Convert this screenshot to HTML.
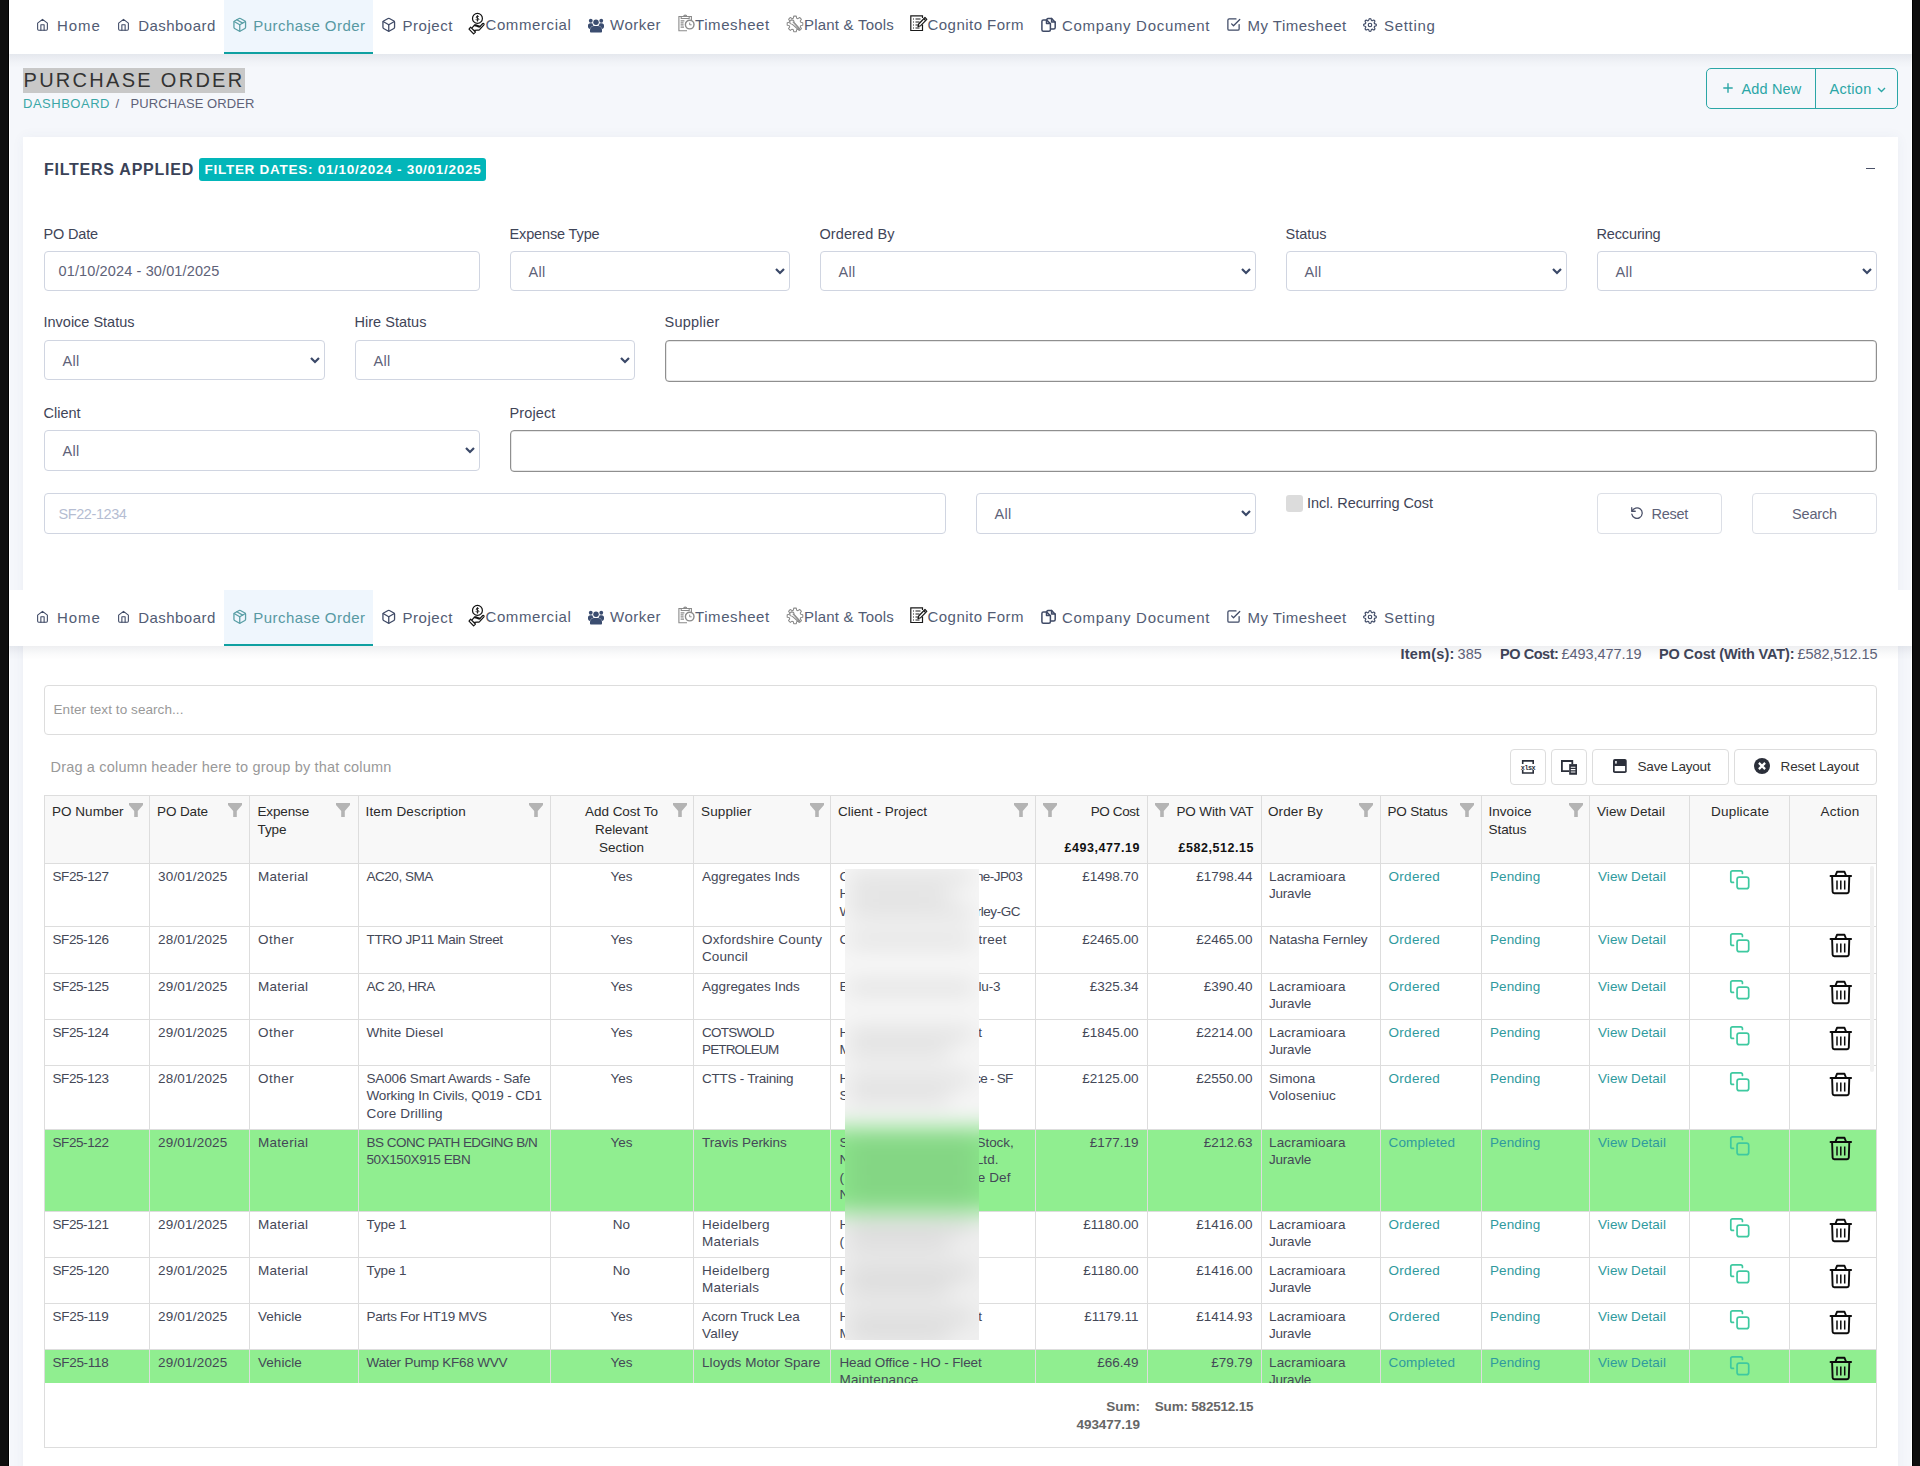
<!DOCTYPE html>
<html lang="en"><head><meta charset="utf-8"><title>Purchase Order</title>
<style>
html,body{margin:0;padding:0}
body{width:1920px;height:1466px;position:relative;overflow:hidden;background:#f5f7fb;font-family:"Liberation Sans",sans-serif}
#main,.nav{position:absolute;left:0;width:1920px}
#main{top:0;height:1466px}
.nav{height:56px}
#main div,.nav div{position:absolute;box-sizing:border-box}
.t{position:absolute;white-space:pre;line-height:20px}
svg{position:absolute;overflow:visible}
.strip{position:absolute;top:0;height:1466px;background:#0e0e0e}
.navbg{left:9px;top:0;width:1903px;height:56px;background:#fff}
.navsh{left:9px;top:56px;width:1903px;height:14px;background:linear-gradient(rgba(30,40,70,.075),rgba(30,40,70,.02) 60%,rgba(30,40,70,0))}
.inp{background:#fff;border:1px solid #d0d5e1;border-radius:4px}
.inp2{background:#fff;border:1px solid #8f8f8f;border-radius:4px;box-shadow:inset 0 0 0 .5px #d0d0d0}
.btn{background:#fff;border:1px solid #dcdfe6;border-radius:4px}
.gbtn{background:#fff;border:1px solid #ddd;border-radius:4px}
.vl{width:1px;background:#ddd}
.hl{height:1px;background:#ddd}
</style></head>
<body>
<div style="position:absolute;left:9px;top:0;width:1px;height:1466px;background:#fff"></div>
<div style="position:absolute;left:1911px;top:0;width:1px;height:1466px;background:#fff"></div>
<div id="main">
<div style="left:23px;top:68px;width:222px;height:25px;background:#c8c8c8"></div>
<div style="left:1706px;top:68px;width:192px;height:41px;border:1px solid #2ba6a6;border-radius:5px;background:transparent"></div>
<div style="left:1815px;top:68px;width:1px;height:41px;background:#2ba6a6"></div>
<svg style="left:1723px;top:83px" width="10" height="10" viewBox="0 0 10 10"><path d="M5 .3v9.400M.3 5h9.400" stroke="#2ba6a6" stroke-width="1.400"/></svg>
<svg style="left:1877px;top:87px" width="9" height="6" viewBox="0 0 9 6"><path d="M1 1l3.5 3.5L8 1" fill="none" stroke="#2ba6a6" stroke-width="1.4"/></svg>
<div style="left:23px;top:137px;width:1875px;height:1340px;background:#fff;box-shadow:0 0 12px rgba(60,70,110,.05)"></div>
<div style="left:199px;top:158px;width:287px;height:23px;background:#02b6b9;border-radius:3px"></div>
<div style="left:1865.5px;top:168px;width:9.5px;height:1.3px;background:#4a5168"></div>
<div class="inp" style="left:44px;top:251px;width:436px;height:40px"></div>
<div class="inp" style="left:510px;top:251px;width:280px;height:40px"></div>
<svg style="left:775px;top:267.5px" width="10" height="7" viewBox="0 0 10 7"><path d="M1 1l4 4 4-4" fill="none" stroke="#3a4868" stroke-width="2.200"/></svg>
<div class="inp" style="left:820px;top:251px;width:436px;height:40px"></div>
<svg style="left:1241px;top:267.5px" width="10" height="7" viewBox="0 0 10 7"><path d="M1 1l4 4 4-4" fill="none" stroke="#3a4868" stroke-width="2.200"/></svg>
<div class="inp" style="left:1286px;top:251px;width:281px;height:40px"></div>
<svg style="left:1552px;top:267.5px" width="10" height="7" viewBox="0 0 10 7"><path d="M1 1l4 4 4-4" fill="none" stroke="#3a4868" stroke-width="2.200"/></svg>
<div class="inp" style="left:1597px;top:251px;width:280px;height:40px"></div>
<svg style="left:1862px;top:267.5px" width="10" height="7" viewBox="0 0 10 7"><path d="M1 1l4 4 4-4" fill="none" stroke="#3a4868" stroke-width="2.200"/></svg>
<div class="inp" style="left:44px;top:340px;width:281px;height:40px"></div>
<svg style="left:310px;top:356.5px" width="10" height="7" viewBox="0 0 10 7"><path d="M1 1l4 4 4-4" fill="none" stroke="#3a4868" stroke-width="2.200"/></svg>
<div class="inp" style="left:355px;top:340px;width:280px;height:40px"></div>
<svg style="left:620px;top:356.5px" width="10" height="7" viewBox="0 0 10 7"><path d="M1 1l4 4 4-4" fill="none" stroke="#3a4868" stroke-width="2.200"/></svg>
<div class="inp2" style="left:665px;top:340px;width:1212px;height:42px"></div>
<div class="inp" style="left:44px;top:430px;width:436px;height:41px"></div>
<svg style="left:465px;top:446.5px" width="10" height="7" viewBox="0 0 10 7"><path d="M1 1l4 4 4-4" fill="none" stroke="#3a4868" stroke-width="2.200"/></svg>
<div class="inp2" style="left:510px;top:430px;width:1367px;height:42px"></div>
<div class="inp" style="left:44px;top:493px;width:902px;height:41px"></div>
<div class="inp" style="left:976px;top:493px;width:280px;height:41px"></div>
<svg style="left:1241px;top:509.5px" width="10" height="7" viewBox="0 0 10 7"><path d="M1 1l4 4 4-4" fill="none" stroke="#3a4868" stroke-width="2.200"/></svg>
<div style="left:1286px;top:495px;width:17px;height:17px;background:#dcdcdc;border-radius:3px"></div>
<div class="btn" style="left:1597px;top:493px;width:125px;height:41px"></div>
<svg style="left:1630px;top:506px" width="14" height="14" viewBox="0 0 24 24" fill="none" stroke="#4a5068" stroke-width="2.2" stroke-linecap="round" stroke-linejoin="round"><path d="M3 3v6h6"/><path d="M3.5 9a9 9 0 1 1-.4 5"/></svg>
<div class="btn" style="left:1752px;top:493px;width:125px;height:41px"></div>
<div class="gbtn" style="left:44px;top:685px;width:1833px;height:50px"></div>
<div class="gbtn" style="left:1510px;top:749px;width:36px;height:36px"></div>
<div class="gbtn" style="left:1551px;top:749px;width:36px;height:36px"></div>
<div class="gbtn" style="left:1592px;top:749px;width:137px;height:36px"></div>
<div class="gbtn" style="left:1734px;top:749px;width:143px;height:36px"></div>
<svg style="left:1520px;top:759px" width="16" height="16" viewBox="0 0 16 16"><path d="M2.700 5V1.900h10.500V5M2.700 11v3h10.500v-3" fill="none" stroke="#2b2f3a" stroke-width="1.600"/><text x="8" y="11.200" text-anchor="middle" font-family="Liberation Mono, monospace" font-size="6.800" font-weight="700" letter-spacing="-.5" fill="#2b2f3a">xlsx</text></svg>
<svg style="left:1560px;top:759px" width="18" height="16" viewBox="0 0 18 16"><path d="M9.200 12.100H1.900V2h10.400v3.100" fill="none" stroke="#2b2f3a" stroke-width="1.800"/><rect x="9.200" y="5.100" width="7.800" height="10.650" fill="#2b2f3a"/><path d="M10.800 8.200h4.600M10.800 10.600h4.600M10.800 13h4.600" stroke="#fff" stroke-width="1.100"/></svg>
<svg style="left:1613px;top:759px" width="14" height="14" viewBox="0 0 14 14"><rect x="0" y="0" width="13.700" height="14" rx="1.800" fill="#2b2f3a"/><rect x="2.200" y="2" width="1.500" height="2.600" fill="#fff"/><rect x="1.700" y="7" width="10.400" height="5.200" fill="#fff"/></svg>
<svg style="left:1754px;top:758px" width="16" height="16" viewBox="0 0 16 16"><circle cx="8" cy="8" r="8" fill="#2b2f3a"/><path d="M4.900 4.900l6.200 6.200M11.100 4.900l-6.200 6.200" stroke="#fff" stroke-width="2.200"/></svg>
<div style="left:44px;top:795px;width:1833px;height:653px;border:1px solid #ddd;background:#fff"></div>
<div style="left:45px;top:796px;width:1831px;height:67px;background:#f8f8f8"></div>
<div style="left:45px;top:1130px;width:1831px;height:81px;background:#90ee90"></div>
<div style="left:45px;top:1350px;width:1831px;height:33px;background:#90ee90"></div>
<div style="left:149px;top:796px;width:1px;height:587px;background:#ddd"></div>
<div style="left:249px;top:796px;width:1px;height:587px;background:#ddd"></div>
<div style="left:358px;top:796px;width:1px;height:587px;background:#ddd"></div>
<div style="left:550px;top:796px;width:1px;height:587px;background:#ddd"></div>
<div style="left:693px;top:796px;width:1px;height:587px;background:#ddd"></div>
<div style="left:830px;top:796px;width:1px;height:587px;background:#ddd"></div>
<div style="left:1035px;top:796px;width:1px;height:587px;background:#ddd"></div>
<div style="left:1147px;top:796px;width:1px;height:587px;background:#ddd"></div>
<div style="left:1261px;top:796px;width:1px;height:587px;background:#ddd"></div>
<div style="left:1380px;top:796px;width:1px;height:587px;background:#ddd"></div>
<div style="left:1481px;top:796px;width:1px;height:587px;background:#ddd"></div>
<div style="left:1589px;top:796px;width:1px;height:587px;background:#ddd"></div>
<div style="left:1689px;top:796px;width:1px;height:587px;background:#ddd"></div>
<div style="left:1789px;top:796px;width:1px;height:587px;background:#ddd"></div>
<div style="left:45px;top:863px;width:1831px;height:1px;background:#ddd"></div>
<div style="left:45px;top:926px;width:1831px;height:1px;background:#ddd"></div>
<div style="left:45px;top:973px;width:1831px;height:1px;background:#ddd"></div>
<div style="left:45px;top:1019px;width:1831px;height:1px;background:#ddd"></div>
<div style="left:45px;top:1065px;width:1831px;height:1px;background:#ddd"></div>
<div style="left:45px;top:1129px;width:1831px;height:1px;background:#ddd"></div>
<div style="left:45px;top:1211px;width:1831px;height:1px;background:#ddd"></div>
<div style="left:45px;top:1257px;width:1831px;height:1px;background:#ddd"></div>
<div style="left:45px;top:1303px;width:1831px;height:1px;background:#ddd"></div>
<div style="left:45px;top:1349px;width:1831px;height:1px;background:#ddd"></div>
<svg style="left:128.5px;top:803px" width="14" height="14" viewBox="0 0 14 14"><path d="M0 0h14v2L8.800 8v6H5.200V8L0 2z" fill="#b4b4b4"/></svg>
<svg style="left:228px;top:803px" width="14" height="14" viewBox="0 0 14 14"><path d="M0 0h14v2L8.800 8v6H5.200V8L0 2z" fill="#b4b4b4"/></svg>
<svg style="left:336px;top:803px" width="14" height="14" viewBox="0 0 14 14"><path d="M0 0h14v2L8.800 8v6H5.200V8L0 2z" fill="#b4b4b4"/></svg>
<svg style="left:529px;top:803px" width="14" height="14" viewBox="0 0 14 14"><path d="M0 0h14v2L8.800 8v6H5.200V8L0 2z" fill="#b4b4b4"/></svg>
<svg style="left:672.5px;top:803px" width="14" height="14" viewBox="0 0 14 14"><path d="M0 0h14v2L8.800 8v6H5.200V8L0 2z" fill="#b4b4b4"/></svg>
<svg style="left:809.5px;top:803px" width="14" height="14" viewBox="0 0 14 14"><path d="M0 0h14v2L8.800 8v6H5.200V8L0 2z" fill="#b4b4b4"/></svg>
<svg style="left:1013.5px;top:803px" width="14" height="14" viewBox="0 0 14 14"><path d="M0 0h14v2L8.800 8v6H5.200V8L0 2z" fill="#b4b4b4"/></svg>
<svg style="left:1042.5px;top:803px" width="14" height="14" viewBox="0 0 14 14"><path d="M0 0h14v2L8.800 8v6H5.200V8L0 2z" fill="#b4b4b4"/></svg>
<svg style="left:1154.5px;top:803px" width="14" height="14" viewBox="0 0 14 14"><path d="M0 0h14v2L8.800 8v6H5.200V8L0 2z" fill="#b4b4b4"/></svg>
<svg style="left:1358.5px;top:803px" width="14" height="14" viewBox="0 0 14 14"><path d="M0 0h14v2L8.800 8v6H5.200V8L0 2z" fill="#b4b4b4"/></svg>
<svg style="left:1460px;top:803px" width="14" height="14" viewBox="0 0 14 14"><path d="M0 0h14v2L8.800 8v6H5.200V8L0 2z" fill="#b4b4b4"/></svg>
<svg style="left:1568.5px;top:803px" width="14" height="14" viewBox="0 0 14 14"><path d="M0 0h14v2L8.800 8v6H5.200V8L0 2z" fill="#b4b4b4"/></svg>
<svg style="left:1729.3px;top:869.1px" width="21.500" height="21.500" viewBox="0 0 24 24"><g fill="none" stroke="#3ec9a0" stroke-width="1.900" stroke-linecap="round" stroke-linejoin="round"><rect x="9" y="9" width="13" height="13" rx="2.500"/><path d="M5 15H4a2 2 0 0 1-2-2V4a2 2 0 0 1 2-2h9a2 2 0 0 1 2 2v1"/></g></svg>
<svg style="left:1828.5px;top:870px" width="24" height="24" viewBox="0 0 24 24"><g fill="none" stroke="#0c0c0c" stroke-width="1.900" stroke-linejoin="round"><path d="M1.500 6H22.100" stroke-linecap="round"/><path d="M6.300 6L8 1.800h7.500L17.200 6"/><path d="M3.100 6l.5 15.600q.1 1.600 1.700 1.600h12.800q1.600 0 1.700-1.600L20.300 6"/><path d="M8 10.500v9M11.800 10.500v9M15.700 10.500v9" stroke-width="1.500"/></g></svg>
<svg style="left:1729.3px;top:932.1px" width="21.500" height="21.500" viewBox="0 0 24 24"><g fill="none" stroke="#3ec9a0" stroke-width="1.900" stroke-linecap="round" stroke-linejoin="round"><rect x="9" y="9" width="13" height="13" rx="2.500"/><path d="M5 15H4a2 2 0 0 1-2-2V4a2 2 0 0 1 2-2h9a2 2 0 0 1 2 2v1"/></g></svg>
<svg style="left:1828.5px;top:933px" width="24" height="24" viewBox="0 0 24 24"><g fill="none" stroke="#0c0c0c" stroke-width="1.900" stroke-linejoin="round"><path d="M1.500 6H22.100" stroke-linecap="round"/><path d="M6.300 6L8 1.800h7.500L17.200 6"/><path d="M3.100 6l.5 15.600q.1 1.600 1.700 1.600h12.800q1.600 0 1.700-1.600L20.300 6"/><path d="M8 10.500v9M11.800 10.500v9M15.700 10.500v9" stroke-width="1.500"/></g></svg>
<svg style="left:1729.3px;top:979.1px" width="21.500" height="21.500" viewBox="0 0 24 24"><g fill="none" stroke="#3ec9a0" stroke-width="1.900" stroke-linecap="round" stroke-linejoin="round"><rect x="9" y="9" width="13" height="13" rx="2.500"/><path d="M5 15H4a2 2 0 0 1-2-2V4a2 2 0 0 1 2-2h9a2 2 0 0 1 2 2v1"/></g></svg>
<svg style="left:1828.5px;top:980px" width="24" height="24" viewBox="0 0 24 24"><g fill="none" stroke="#0c0c0c" stroke-width="1.900" stroke-linejoin="round"><path d="M1.500 6H22.100" stroke-linecap="round"/><path d="M6.300 6L8 1.800h7.500L17.200 6"/><path d="M3.100 6l.5 15.600q.1 1.600 1.700 1.600h12.800q1.600 0 1.700-1.600L20.300 6"/><path d="M8 10.500v9M11.800 10.500v9M15.700 10.500v9" stroke-width="1.500"/></g></svg>
<svg style="left:1729.3px;top:1025.1px" width="21.500" height="21.500" viewBox="0 0 24 24"><g fill="none" stroke="#3ec9a0" stroke-width="1.900" stroke-linecap="round" stroke-linejoin="round"><rect x="9" y="9" width="13" height="13" rx="2.500"/><path d="M5 15H4a2 2 0 0 1-2-2V4a2 2 0 0 1 2-2h9a2 2 0 0 1 2 2v1"/></g></svg>
<svg style="left:1828.5px;top:1026px" width="24" height="24" viewBox="0 0 24 24"><g fill="none" stroke="#0c0c0c" stroke-width="1.900" stroke-linejoin="round"><path d="M1.500 6H22.100" stroke-linecap="round"/><path d="M6.300 6L8 1.800h7.500L17.200 6"/><path d="M3.100 6l.5 15.600q.1 1.600 1.700 1.600h12.800q1.600 0 1.700-1.600L20.300 6"/><path d="M8 10.500v9M11.800 10.500v9M15.700 10.500v9" stroke-width="1.500"/></g></svg>
<svg style="left:1729.3px;top:1071.1px" width="21.500" height="21.500" viewBox="0 0 24 24"><g fill="none" stroke="#3ec9a0" stroke-width="1.900" stroke-linecap="round" stroke-linejoin="round"><rect x="9" y="9" width="13" height="13" rx="2.500"/><path d="M5 15H4a2 2 0 0 1-2-2V4a2 2 0 0 1 2-2h9a2 2 0 0 1 2 2v1"/></g></svg>
<svg style="left:1828.5px;top:1072px" width="24" height="24" viewBox="0 0 24 24"><g fill="none" stroke="#0c0c0c" stroke-width="1.900" stroke-linejoin="round"><path d="M1.500 6H22.100" stroke-linecap="round"/><path d="M6.300 6L8 1.800h7.500L17.200 6"/><path d="M3.100 6l.5 15.600q.1 1.600 1.700 1.600h12.800q1.600 0 1.700-1.600L20.300 6"/><path d="M8 10.500v9M11.800 10.500v9M15.700 10.500v9" stroke-width="1.500"/></g></svg>
<svg style="left:1729.3px;top:1135.1px" width="21.500" height="21.500" viewBox="0 0 24 24"><g fill="none" stroke="#3ec9a0" stroke-width="1.900" stroke-linecap="round" stroke-linejoin="round"><rect x="9" y="9" width="13" height="13" rx="2.500"/><path d="M5 15H4a2 2 0 0 1-2-2V4a2 2 0 0 1 2-2h9a2 2 0 0 1 2 2v1"/></g></svg>
<svg style="left:1828.5px;top:1136px" width="24" height="24" viewBox="0 0 24 24"><g fill="none" stroke="#0c0c0c" stroke-width="1.900" stroke-linejoin="round"><path d="M1.500 6H22.100" stroke-linecap="round"/><path d="M6.300 6L8 1.800h7.500L17.200 6"/><path d="M3.100 6l.5 15.600q.1 1.600 1.700 1.600h12.800q1.600 0 1.700-1.600L20.300 6"/><path d="M8 10.500v9M11.800 10.500v9M15.700 10.500v9" stroke-width="1.500"/></g></svg>
<svg style="left:1729.3px;top:1217.1px" width="21.500" height="21.500" viewBox="0 0 24 24"><g fill="none" stroke="#3ec9a0" stroke-width="1.900" stroke-linecap="round" stroke-linejoin="round"><rect x="9" y="9" width="13" height="13" rx="2.500"/><path d="M5 15H4a2 2 0 0 1-2-2V4a2 2 0 0 1 2-2h9a2 2 0 0 1 2 2v1"/></g></svg>
<svg style="left:1828.5px;top:1218px" width="24" height="24" viewBox="0 0 24 24"><g fill="none" stroke="#0c0c0c" stroke-width="1.900" stroke-linejoin="round"><path d="M1.500 6H22.100" stroke-linecap="round"/><path d="M6.300 6L8 1.800h7.500L17.200 6"/><path d="M3.100 6l.5 15.600q.1 1.600 1.700 1.600h12.800q1.600 0 1.700-1.600L20.300 6"/><path d="M8 10.500v9M11.800 10.500v9M15.700 10.500v9" stroke-width="1.500"/></g></svg>
<svg style="left:1729.3px;top:1263.1px" width="21.500" height="21.500" viewBox="0 0 24 24"><g fill="none" stroke="#3ec9a0" stroke-width="1.900" stroke-linecap="round" stroke-linejoin="round"><rect x="9" y="9" width="13" height="13" rx="2.500"/><path d="M5 15H4a2 2 0 0 1-2-2V4a2 2 0 0 1 2-2h9a2 2 0 0 1 2 2v1"/></g></svg>
<svg style="left:1828.5px;top:1264px" width="24" height="24" viewBox="0 0 24 24"><g fill="none" stroke="#0c0c0c" stroke-width="1.900" stroke-linejoin="round"><path d="M1.500 6H22.100" stroke-linecap="round"/><path d="M6.300 6L8 1.800h7.500L17.200 6"/><path d="M3.100 6l.5 15.600q.1 1.600 1.700 1.600h12.800q1.600 0 1.700-1.600L20.300 6"/><path d="M8 10.500v9M11.800 10.500v9M15.700 10.500v9" stroke-width="1.500"/></g></svg>
<svg style="left:1729.3px;top:1309.1px" width="21.500" height="21.500" viewBox="0 0 24 24"><g fill="none" stroke="#3ec9a0" stroke-width="1.900" stroke-linecap="round" stroke-linejoin="round"><rect x="9" y="9" width="13" height="13" rx="2.500"/><path d="M5 15H4a2 2 0 0 1-2-2V4a2 2 0 0 1 2-2h9a2 2 0 0 1 2 2v1"/></g></svg>
<svg style="left:1828.5px;top:1310px" width="24" height="24" viewBox="0 0 24 24"><g fill="none" stroke="#0c0c0c" stroke-width="1.900" stroke-linejoin="round"><path d="M1.500 6H22.100" stroke-linecap="round"/><path d="M6.300 6L8 1.800h7.500L17.200 6"/><path d="M3.100 6l.5 15.600q.1 1.600 1.700 1.600h12.800q1.600 0 1.700-1.600L20.300 6"/><path d="M8 10.500v9M11.800 10.500v9M15.700 10.500v9" stroke-width="1.500"/></g></svg>
<div style="left:45px;top:1349px;width:1831px;height:34px;overflow:hidden"><div style="left:-45px;top:0;width:1920px;height:60px"><svg style="left:1729.3px;top:6.1px" width="21.500" height="21.500" viewBox="0 0 24 24"><g fill="none" stroke="#3ec9a0" stroke-width="1.900" stroke-linecap="round" stroke-linejoin="round"><rect x="9" y="9" width="13" height="13" rx="2.500"/><path d="M5 15H4a2 2 0 0 1-2-2V4a2 2 0 0 1 2-2h9a2 2 0 0 1 2 2v1"/></g></svg>
<svg style="left:1828.5px;top:7px" width="24" height="24" viewBox="0 0 24 24"><g fill="none" stroke="#0c0c0c" stroke-width="1.900" stroke-linejoin="round"><path d="M1.500 6H22.100" stroke-linecap="round"/><path d="M6.300 6L8 1.800h7.500L17.200 6"/><path d="M3.100 6l.5 15.600q.1 1.600 1.700 1.600h12.800q1.600 0 1.700-1.600L20.300 6"/><path d="M8 10.500v9M11.800 10.500v9M15.700 10.500v9" stroke-width="1.500"/></g></svg>
<span class="t" style="left:52.50px;top:4px;font-size:13.5px;color:#444857;letter-spacing:-0.287px;">SF25-118</span>
<span class="t" style="left:158.00px;top:4px;font-size:13.5px;color:#444857;letter-spacing:0.192px;">29/01/2025</span>
<span class="t" style="left:258.00px;top:4px;font-size:13.5px;color:#444857;letter-spacing:0.036px;">Vehicle</span>
<span class="t" style="left:366.50px;top:4px;font-size:13.5px;color:#444857;letter-spacing:-0.224px;">Water Pump KF68 WVV</span>
<span class="t" style="left:610.48px;top:4px;font-size:13.5px;color:#444857;">Yes</span>
<span class="t" style="left:702.00px;top:4px;font-size:13.5px;color:#444857;letter-spacing:0.069px;">Lloyds Motor Spare</span>
<span class="t" style="left:839.50px;top:4px;font-size:13.5px;color:#444857;letter-spacing:-0.137px;">Head Office - HO - Fleet</span>
<span class="t" style="left:839.50px;top:21px;font-size:13.5px;color:#444857;letter-spacing:0.153px;">Maintenance</span>
<span class="t" style="left:1097.20px;top:4px;font-size:13.5px;color:#444857;">£66.49</span>
<span class="t" style="left:1211.20px;top:4px;font-size:13.5px;color:#444857;">£79.79</span>
<span class="t" style="left:1269.00px;top:4px;font-size:13.5px;color:#444857;letter-spacing:0.141px;">Lacramioara</span>
<span class="t" style="left:1269.00px;top:21px;font-size:13.5px;color:#444857;letter-spacing:-0.219px;">Juravle</span>
<span class="t" style="left:1388.50px;top:4px;font-size:13.5px;color:#2f9a9e;letter-spacing:0.145px;">Completed</span>
<span class="t" style="left:1490.00px;top:4px;font-size:13.5px;color:#2f9a9e;letter-spacing:0.108px;">Pending</span>
<span class="t" style="left:1598.00px;top:4px;font-size:13.5px;color:#2f9a9e;letter-spacing:0.064px;">View Detail</span></div></div>
<div style="left:1870px;top:866px;width:4px;height:206px;background:#f1f1f1;border-radius:2px"></div>
<div style="left:845px;top:869px;width:134px;height:471px;overflow:hidden;background:#f2f2f2;z-index:3"><div style="left:-40px;top:-40px;width:214px;height:551px;filter:blur(11px)"><div style="left:0;top:0;width:214px;height:551px;background:linear-gradient(#f7f7f7 0,#f5f5f5 50%,#eee 75%,#f0f0f0 100%)"></div><div style="left:0;top:298px;width:214px;height:86px;background:#8ae58a"></div><div style="left:40px;top:40px;width:134px;height:471px"><div style="left:4px;top:4.0px;width:124px;height:9px;background:#555;opacity:.2"></div><div style="left:4px;top:21.5px;width:100px;height:9px;background:#555;opacity:.2"></div><div style="left:4px;top:39.0px;width:124px;height:9px;background:#555;opacity:.2"></div><div style="left:4px;top:67.0px;width:124px;height:9px;background:#555;opacity:.2"></div><div style="left:4px;top:114.0px;width:124px;height:9px;background:#555;opacity:.2"></div><div style="left:4px;top:160.0px;width:124px;height:9px;background:#555;opacity:.2"></div><div style="left:4px;top:177.5px;width:100px;height:9px;background:#555;opacity:.2"></div><div style="left:4px;top:206.0px;width:124px;height:9px;background:#555;opacity:.2"></div><div style="left:4px;top:223.5px;width:100px;height:9px;background:#555;opacity:.2"></div><div style="left:4px;top:270.0px;width:126px;height:9px;background:#555;opacity:.2"></div><div style="left:4px;top:287.5px;width:126px;height:9px;background:#555;opacity:.2"></div><div style="left:4px;top:305.0px;width:126px;height:9px;background:#555;opacity:.2"></div><div style="left:4px;top:322.5px;width:126px;height:9px;background:#555;opacity:.2"></div><div style="left:4px;top:352.0px;width:124px;height:9px;background:#555;opacity:.2"></div><div style="left:4px;top:369.5px;width:100px;height:9px;background:#555;opacity:.2"></div><div style="left:4px;top:398.0px;width:124px;height:9px;background:#555;opacity:.2"></div><div style="left:4px;top:415.5px;width:100px;height:9px;background:#555;opacity:.2"></div><div style="left:4px;top:444.0px;width:124px;height:9px;background:#555;opacity:.2"></div><div style="left:4px;top:461.5px;width:100px;height:9px;background:#555;opacity:.2"></div></div></div></div>
<span class="t" style="left:23.50px;top:70px;font-size:20px;color:#333;letter-spacing:2.291px;">PURCHASE ORDER</span>
<span class="t" style="left:23.00px;top:94px;font-size:13px;color:#3ba7a7;letter-spacing:0.516px;">DASHBOARD</span>
<span class="t" style="left:115.50px;top:94px;font-size:13px;color:#5e6278;">/</span>
<span class="t" style="left:130.50px;top:94px;font-size:13px;color:#5e6278;letter-spacing:0.086px;">PURCHASE ORDER</span>
<span class="t" style="left:1741.50px;top:79px;font-size:14.5px;color:#2ba6a6;letter-spacing:0.165px;">Add New</span>
<span class="t" style="left:1829.50px;top:79px;font-size:14.5px;color:#2ba6a6;letter-spacing:0.281px;">Action</span>
<span class="t" style="left:44.00px;top:160px;font-size:16px;color:#3a4257;font-weight:700;letter-spacing:0.755px;">FILTERS APPLIED</span>
<span class="t" style="left:204.50px;top:160px;font-size:13.5px;color:#fff;font-weight:700;letter-spacing:0.726px;">FILTER DATES: 01/10/2024 - 30/01/2025</span>
<span class="t" style="left:43.50px;top:224px;font-size:14.5px;color:#3f4558;letter-spacing:-0.158px;">PO Date</span>
<span class="t" style="left:58.50px;top:261px;font-size:14.5px;color:#5e6278;letter-spacing:0.129px;">01/10/2024 - 30/01/2025</span>
<span class="t" style="left:509.50px;top:224px;font-size:14.5px;color:#3f4558;letter-spacing:-0.137px;">Expense Type</span>
<span class="t" style="left:528.50px;top:262px;font-size:14.5px;color:#5e6278;letter-spacing:0.292px;">All</span>
<span class="t" style="left:819.50px;top:224px;font-size:14.5px;color:#3f4558;letter-spacing:0.084px;">Ordered By</span>
<span class="t" style="left:838.50px;top:262px;font-size:14.5px;color:#5e6278;letter-spacing:0.292px;">All</span>
<span class="t" style="left:1285.50px;top:224px;font-size:14.5px;color:#3f4558;letter-spacing:-0.018px;">Status</span>
<span class="t" style="left:1304.50px;top:262px;font-size:14.5px;color:#5e6278;letter-spacing:0.292px;">All</span>
<span class="t" style="left:1596.50px;top:224px;font-size:14.5px;color:#3f4558;letter-spacing:-0.142px;">Reccuring</span>
<span class="t" style="left:1615.50px;top:262px;font-size:14.5px;color:#5e6278;letter-spacing:0.292px;">All</span>
<span class="t" style="left:43.50px;top:312px;font-size:14.5px;color:#3f4558;letter-spacing:-0.006px;">Invoice Status</span>
<span class="t" style="left:62.50px;top:351px;font-size:14.5px;color:#5e6278;letter-spacing:0.292px;">All</span>
<span class="t" style="left:354.50px;top:312px;font-size:14.5px;color:#3f4558;letter-spacing:0.024px;">Hire Status</span>
<span class="t" style="left:373.50px;top:351px;font-size:14.5px;color:#5e6278;letter-spacing:0.292px;">All</span>
<span class="t" style="left:664.50px;top:312px;font-size:14.5px;color:#3f4558;letter-spacing:0.225px;">Supplier</span>
<span class="t" style="left:43.50px;top:403px;font-size:14.5px;color:#3f4558;letter-spacing:-0.013px;">Client</span>
<span class="t" style="left:62.50px;top:441px;font-size:14.5px;color:#5e6278;letter-spacing:0.292px;">All</span>
<span class="t" style="left:509.50px;top:403px;font-size:14.5px;color:#3f4558;letter-spacing:0.123px;">Project</span>
<span class="t" style="left:58.50px;top:504px;font-size:14.5px;color:#b5bdd2;letter-spacing:-0.417px;">SF22-1234</span>
<span class="t" style="left:994.50px;top:504px;font-size:14.5px;color:#5e6278;letter-spacing:0.292px;">All</span>
<span class="t" style="left:1307.00px;top:493px;font-size:14.5px;color:#3f4558;letter-spacing:-0.066px;">Incl. Recurring Cost</span>
<span class="t" style="left:1651.50px;top:504px;font-size:14.5px;color:#5e6278;letter-spacing:-0.278px;">Reset</span>
<span class="t" style="left:1792.00px;top:504px;font-size:14.5px;color:#5e6278;letter-spacing:-0.159px;">Search</span>
<span class="t" style="left:1400.50px;top:644px;font-size:14.5px;color:#3f4558;font-weight:700;letter-spacing:0.203px;">Item(s):</span>
<span class="t" style="left:1457.50px;top:644px;font-size:14.5px;color:#5e6278;letter-spacing:0.099px;">385</span>
<span class="t" style="left:1500.00px;top:644px;font-size:14.5px;color:#3f4558;font-weight:700;letter-spacing:-0.441px;">PO Cost:</span>
<span class="t" style="left:1561.50px;top:644px;font-size:14.5px;color:#5e6278;letter-spacing:-0.058px;">£493,477.19</span>
<span class="t" style="left:1659.00px;top:644px;font-size:14.5px;color:#3f4558;font-weight:700;letter-spacing:-0.125px;">PO Cost (With VAT):</span>
<span class="t" style="left:1797.50px;top:644px;font-size:14.5px;color:#5e6278;letter-spacing:-0.058px;">£582,512.15</span>
<span class="t" style="left:53.50px;top:700px;font-size:13.5px;color:#999;letter-spacing:0.073px;">Enter text to search...</span>
<span class="t" style="left:50.50px;top:757px;font-size:14.5px;color:#999;letter-spacing:0.182px;">Drag a column header here to group by that column</span>
<span class="t" style="left:1637.50px;top:757px;font-size:13.5px;color:#333;letter-spacing:-0.188px;">Save Layout</span>
<span class="t" style="left:1780.50px;top:757px;font-size:13.5px;color:#333;letter-spacing:-0.089px;">Reset Layout</span>
<span class="t" style="left:52.00px;top:802px;font-size:13.5px;color:#2a2a2a;letter-spacing:0.024px;">PO Number</span>
<span class="t" style="left:157.00px;top:802px;font-size:13.5px;color:#2a2a2a;letter-spacing:-0.112px;">PO Date</span>
<span class="t" style="left:257.50px;top:802px;font-size:13.5px;color:#2a2a2a;letter-spacing:-0.150px;">Expense</span>
<span class="t" style="left:257.50px;top:820px;font-size:13.5px;color:#2a2a2a;letter-spacing:-0.070px;">Type</span>
<span class="t" style="left:365.50px;top:802px;font-size:13.5px;color:#2a2a2a;letter-spacing:0.185px;">Item Description</span>
<span class="t" style="left:584.99px;top:802px;font-size:13.5px;color:#2a2a2a;letter-spacing:-0.027px;">Add Cost To</span>
<span class="t" style="left:594.98px;top:820px;font-size:13.5px;color:#2a2a2a;letter-spacing:-0.037px;">Relevant</span>
<span class="t" style="left:599.00px;top:838px;font-size:13.5px;color:#2a2a2a;letter-spacing:-0.004px;">Section</span>
<span class="t" style="left:701.00px;top:802px;font-size:13.5px;color:#2a2a2a;letter-spacing:0.121px;">Supplier</span>
<span class="t" style="left:838.00px;top:802px;font-size:13.5px;color:#2a2a2a;letter-spacing:0.029px;">Client - Project</span>
<span class="t" style="left:1090.64px;top:802px;font-size:13.5px;color:#2a2a2a;letter-spacing:-0.359px;">PO Cost</span>
<span class="t" style="left:1064.54px;top:838px;font-size:12.5px;color:#111;font-weight:700;letter-spacing:0.544px;">£493,477.19</span>
<span class="t" style="left:1176.38px;top:802px;font-size:13.5px;color:#2a2a2a;letter-spacing:-0.115px;">PO With VAT</span>
<span class="t" style="left:1178.54px;top:838px;font-size:12.5px;color:#111;font-weight:700;letter-spacing:0.544px;">£582,512.15</span>
<span class="t" style="left:1268.00px;top:802px;font-size:13.5px;color:#2a2a2a;letter-spacing:0.123px;">Order By</span>
<span class="t" style="left:1387.50px;top:802px;font-size:13.5px;color:#2a2a2a;letter-spacing:-0.170px;">PO Status</span>
<span class="t" style="left:1488.50px;top:802px;font-size:13.5px;color:#2a2a2a;letter-spacing:0.031px;">Invoice</span>
<span class="t" style="left:1488.50px;top:820px;font-size:13.5px;color:#2a2a2a;letter-spacing:-0.047px;">Status</span>
<span class="t" style="left:1597.00px;top:802px;font-size:13.5px;color:#2a2a2a;letter-spacing:0.064px;">View Detail</span>
<span class="t" style="left:1711.10px;top:802px;font-size:13.5px;color:#2a2a2a;letter-spacing:0.191px;">Duplicate</span>
<span class="t" style="left:1820.62px;top:802px;font-size:13.5px;color:#2a2a2a;letter-spacing:0.245px;">Action</span>
<span class="t" style="left:52.50px;top:867px;font-size:13.5px;color:#444857;letter-spacing:-0.412px;">SF25-127</span>
<span class="t" style="left:158.00px;top:867px;font-size:13.5px;color:#444857;letter-spacing:0.192px;">30/01/2025</span>
<span class="t" style="left:258.00px;top:867px;font-size:13.5px;color:#444857;letter-spacing:0.286px;">Material</span>
<span class="t" style="left:366.50px;top:867px;font-size:13.5px;color:#444857;letter-spacing:-0.470px;">AC20, SMA</span>
<span class="t" style="left:610.48px;top:867px;font-size:13.5px;color:#444857;">Yes</span>
<span class="t" style="left:702.00px;top:867px;font-size:13.5px;color:#444857;letter-spacing:-0.035px;">Aggregates Inds</span>
<span class="t" style="left:839.50px;top:867px;font-size:13.5px;color:#444857;">C</span>
<span class="t" style="left:975.93px;top:867px;font-size:13.5px;color:#444857;letter-spacing:-0.571px;">ne-JP03</span>
<span class="t" style="left:839.50px;top:884px;font-size:13.5px;color:#444857;">H</span>
<span class="t" style="left:839.50px;top:902px;font-size:13.5px;color:#444857;">W</span>
<span class="t" style="left:976.74px;top:902px;font-size:13.5px;color:#444857;letter-spacing:-0.457px;">rley-GC</span>
<span class="t" style="left:1082.19px;top:867px;font-size:13.5px;color:#444857;">£1498.70</span>
<span class="t" style="left:1196.19px;top:867px;font-size:13.5px;color:#444857;">£1798.44</span>
<span class="t" style="left:1269.00px;top:867px;font-size:13.5px;color:#444857;letter-spacing:0.141px;">Lacramioara</span>
<span class="t" style="left:1269.00px;top:884px;font-size:13.5px;color:#444857;letter-spacing:-0.219px;">Juravle</span>
<span class="t" style="left:1388.50px;top:867px;font-size:13.5px;color:#2f9a9e;letter-spacing:0.296px;">Ordered</span>
<span class="t" style="left:1490.00px;top:867px;font-size:13.5px;color:#2f9a9e;letter-spacing:0.108px;">Pending</span>
<span class="t" style="left:1598.00px;top:867px;font-size:13.5px;color:#2f9a9e;letter-spacing:0.064px;">View Detail</span>
<span class="t" style="left:52.50px;top:930px;font-size:13.5px;color:#444857;letter-spacing:-0.412px;">SF25-126</span>
<span class="t" style="left:158.00px;top:930px;font-size:13.5px;color:#444857;letter-spacing:0.192px;">28/01/2025</span>
<span class="t" style="left:258.00px;top:930px;font-size:13.5px;color:#444857;letter-spacing:0.507px;">Other</span>
<span class="t" style="left:366.50px;top:930px;font-size:13.5px;color:#444857;letter-spacing:-0.321px;">TTRO JP11 Main Street</span>
<span class="t" style="left:610.48px;top:930px;font-size:13.5px;color:#444857;">Yes</span>
<span class="t" style="left:702.00px;top:930px;font-size:13.5px;color:#444857;letter-spacing:0.222px;">Oxfordshire County</span>
<span class="t" style="left:702.00px;top:947px;font-size:13.5px;color:#444857;letter-spacing:0.110px;">Council</span>
<span class="t" style="left:839.50px;top:930px;font-size:13.5px;color:#444857;">C</span>
<span class="t" style="left:978.46px;top:930px;font-size:13.5px;color:#444857;letter-spacing:0.257px;">treet</span>
<span class="t" style="left:1082.19px;top:930px;font-size:13.5px;color:#444857;">£2465.00</span>
<span class="t" style="left:1196.19px;top:930px;font-size:13.5px;color:#444857;">£2465.00</span>
<span class="t" style="left:1269.00px;top:930px;font-size:13.5px;color:#444857;letter-spacing:-0.031px;">Natasha Fernley</span>
<span class="t" style="left:1388.50px;top:930px;font-size:13.5px;color:#2f9a9e;letter-spacing:0.296px;">Ordered</span>
<span class="t" style="left:1490.00px;top:930px;font-size:13.5px;color:#2f9a9e;letter-spacing:0.108px;">Pending</span>
<span class="t" style="left:1598.00px;top:930px;font-size:13.5px;color:#2f9a9e;letter-spacing:0.064px;">View Detail</span>
<span class="t" style="left:52.50px;top:977px;font-size:13.5px;color:#444857;letter-spacing:-0.412px;">SF25-125</span>
<span class="t" style="left:158.00px;top:977px;font-size:13.5px;color:#444857;letter-spacing:0.192px;">29/01/2025</span>
<span class="t" style="left:258.00px;top:977px;font-size:13.5px;color:#444857;letter-spacing:0.286px;">Material</span>
<span class="t" style="left:366.50px;top:977px;font-size:13.5px;color:#444857;letter-spacing:-0.523px;">AC 20, HRA</span>
<span class="t" style="left:610.48px;top:977px;font-size:13.5px;color:#444857;">Yes</span>
<span class="t" style="left:702.00px;top:977px;font-size:13.5px;color:#444857;letter-spacing:-0.035px;">Aggregates Inds</span>
<span class="t" style="left:839.50px;top:977px;font-size:13.5px;color:#444857;">E</span>
<span class="t" style="left:978.52px;top:977px;font-size:13.5px;color:#444857;letter-spacing:-0.179px;">lu-3</span>
<span class="t" style="left:1089.69px;top:977px;font-size:13.5px;color:#444857;">£325.34</span>
<span class="t" style="left:1203.69px;top:977px;font-size:13.5px;color:#444857;">£390.40</span>
<span class="t" style="left:1269.00px;top:977px;font-size:13.5px;color:#444857;letter-spacing:0.141px;">Lacramioara</span>
<span class="t" style="left:1269.00px;top:994px;font-size:13.5px;color:#444857;letter-spacing:-0.219px;">Juravle</span>
<span class="t" style="left:1388.50px;top:977px;font-size:13.5px;color:#2f9a9e;letter-spacing:0.296px;">Ordered</span>
<span class="t" style="left:1490.00px;top:977px;font-size:13.5px;color:#2f9a9e;letter-spacing:0.108px;">Pending</span>
<span class="t" style="left:1598.00px;top:977px;font-size:13.5px;color:#2f9a9e;letter-spacing:0.064px;">View Detail</span>
<span class="t" style="left:52.50px;top:1023px;font-size:13.5px;color:#444857;letter-spacing:-0.412px;">SF25-124</span>
<span class="t" style="left:158.00px;top:1023px;font-size:13.5px;color:#444857;letter-spacing:0.192px;">29/01/2025</span>
<span class="t" style="left:258.00px;top:1023px;font-size:13.5px;color:#444857;letter-spacing:0.507px;">Other</span>
<span class="t" style="left:366.50px;top:1023px;font-size:13.5px;color:#444857;letter-spacing:0.085px;">White Diesel</span>
<span class="t" style="left:610.48px;top:1023px;font-size:13.5px;color:#444857;">Yes</span>
<span class="t" style="left:702.00px;top:1023px;font-size:13.5px;color:#444857;letter-spacing:-0.777px;">COTSWOLD</span>
<span class="t" style="left:702.00px;top:1040px;font-size:13.5px;color:#444857;letter-spacing:-0.857px;">PETROLEUM</span>
<span class="t" style="left:839.50px;top:1023px;font-size:13.5px;color:#444857;">H</span>
<span class="t" style="left:978.23px;top:1023px;font-size:13.5px;color:#444857;">t</span>
<span class="t" style="left:839.50px;top:1040px;font-size:13.5px;color:#444857;">M</span>
<span class="t" style="left:1082.19px;top:1023px;font-size:13.5px;color:#444857;">£1845.00</span>
<span class="t" style="left:1196.19px;top:1023px;font-size:13.5px;color:#444857;">£2214.00</span>
<span class="t" style="left:1269.00px;top:1023px;font-size:13.5px;color:#444857;letter-spacing:0.141px;">Lacramioara</span>
<span class="t" style="left:1269.00px;top:1040px;font-size:13.5px;color:#444857;letter-spacing:-0.219px;">Juravle</span>
<span class="t" style="left:1388.50px;top:1023px;font-size:13.5px;color:#2f9a9e;letter-spacing:0.296px;">Ordered</span>
<span class="t" style="left:1490.00px;top:1023px;font-size:13.5px;color:#2f9a9e;letter-spacing:0.108px;">Pending</span>
<span class="t" style="left:1598.00px;top:1023px;font-size:13.5px;color:#2f9a9e;letter-spacing:0.064px;">View Detail</span>
<span class="t" style="left:52.50px;top:1069px;font-size:13.5px;color:#444857;letter-spacing:-0.412px;">SF25-123</span>
<span class="t" style="left:158.00px;top:1069px;font-size:13.5px;color:#444857;letter-spacing:0.192px;">28/01/2025</span>
<span class="t" style="left:258.00px;top:1069px;font-size:13.5px;color:#444857;letter-spacing:0.507px;">Other</span>
<span class="t" style="left:366.50px;top:1069px;font-size:13.5px;color:#444857;letter-spacing:-0.162px;">SA006 Smart Awards - Safe</span>
<span class="t" style="left:366.50px;top:1086px;font-size:13.5px;color:#444857;letter-spacing:-0.156px;">Working In Civils, Q019 - CD1</span>
<span class="t" style="left:366.50px;top:1104px;font-size:13.5px;color:#444857;letter-spacing:0.155px;">Core Drilling</span>
<span class="t" style="left:610.48px;top:1069px;font-size:13.5px;color:#444857;">Yes</span>
<span class="t" style="left:702.00px;top:1069px;font-size:13.5px;color:#444857;letter-spacing:-0.265px;">CTTS - Training</span>
<span class="t" style="left:839.50px;top:1069px;font-size:13.5px;color:#444857;">H</span>
<span class="t" style="left:974.15px;top:1069px;font-size:13.5px;color:#444857;letter-spacing:-0.745px;">ce - SF</span>
<span class="t" style="left:839.50px;top:1086px;font-size:13.5px;color:#444857;">S</span>
<span class="t" style="left:1082.19px;top:1069px;font-size:13.5px;color:#444857;">£2125.00</span>
<span class="t" style="left:1196.19px;top:1069px;font-size:13.5px;color:#444857;">£2550.00</span>
<span class="t" style="left:1269.00px;top:1069px;font-size:13.5px;color:#444857;letter-spacing:0.086px;">Simona</span>
<span class="t" style="left:1269.00px;top:1086px;font-size:13.5px;color:#444857;letter-spacing:0.169px;">Voloseniuc</span>
<span class="t" style="left:1388.50px;top:1069px;font-size:13.5px;color:#2f9a9e;letter-spacing:0.296px;">Ordered</span>
<span class="t" style="left:1490.00px;top:1069px;font-size:13.5px;color:#2f9a9e;letter-spacing:0.108px;">Pending</span>
<span class="t" style="left:1598.00px;top:1069px;font-size:13.5px;color:#2f9a9e;letter-spacing:0.064px;">View Detail</span>
<span class="t" style="left:52.50px;top:1133px;font-size:13.5px;color:#444857;letter-spacing:-0.412px;">SF25-122</span>
<span class="t" style="left:158.00px;top:1133px;font-size:13.5px;color:#444857;letter-spacing:0.192px;">29/01/2025</span>
<span class="t" style="left:258.00px;top:1133px;font-size:13.5px;color:#444857;letter-spacing:0.286px;">Material</span>
<span class="t" style="left:366.50px;top:1133px;font-size:13.5px;color:#444857;letter-spacing:-0.510px;">BS CONC PATH EDGING B/N</span>
<span class="t" style="left:366.50px;top:1150px;font-size:13.5px;color:#444857;letter-spacing:-0.414px;">50X150X915 EBN</span>
<span class="t" style="left:610.48px;top:1133px;font-size:13.5px;color:#444857;">Yes</span>
<span class="t" style="left:702.00px;top:1133px;font-size:13.5px;color:#444857;letter-spacing:-0.015px;">Travis Perkins</span>
<span class="t" style="left:839.50px;top:1133px;font-size:13.5px;color:#444857;">S</span>
<span class="t" style="left:976.46px;top:1133px;font-size:13.5px;color:#444857;letter-spacing:-0.036px;">Stock,</span>
<span class="t" style="left:839.50px;top:1150px;font-size:13.5px;color:#444857;">N</span>
<span class="t" style="left:975.77px;top:1150px;font-size:13.5px;color:#444857;letter-spacing:0.067px;">Ltd.</span>
<span class="t" style="left:839.50px;top:1168px;font-size:13.5px;color:#444857;">(</span>
<span class="t" style="left:977.80px;top:1168px;font-size:13.5px;color:#444857;letter-spacing:0.104px;">e Def</span>
<span class="t" style="left:839.50px;top:1185px;font-size:13.5px;color:#444857;">N</span>
<span class="t" style="left:1089.69px;top:1133px;font-size:13.5px;color:#444857;">£177.19</span>
<span class="t" style="left:1203.69px;top:1133px;font-size:13.5px;color:#444857;">£212.63</span>
<span class="t" style="left:1269.00px;top:1133px;font-size:13.5px;color:#444857;letter-spacing:0.141px;">Lacramioara</span>
<span class="t" style="left:1269.00px;top:1150px;font-size:13.5px;color:#444857;letter-spacing:-0.219px;">Juravle</span>
<span class="t" style="left:1388.50px;top:1133px;font-size:13.5px;color:#2f9a9e;letter-spacing:0.145px;">Completed</span>
<span class="t" style="left:1490.00px;top:1133px;font-size:13.5px;color:#2f9a9e;letter-spacing:0.108px;">Pending</span>
<span class="t" style="left:1598.00px;top:1133px;font-size:13.5px;color:#2f9a9e;letter-spacing:0.064px;">View Detail</span>
<span class="t" style="left:52.50px;top:1215px;font-size:13.5px;color:#444857;letter-spacing:-0.412px;">SF25-121</span>
<span class="t" style="left:158.00px;top:1215px;font-size:13.5px;color:#444857;letter-spacing:0.192px;">29/01/2025</span>
<span class="t" style="left:258.00px;top:1215px;font-size:13.5px;color:#444857;letter-spacing:0.286px;">Material</span>
<span class="t" style="left:366.50px;top:1215px;font-size:13.5px;color:#444857;letter-spacing:-0.122px;">Type 1</span>
<span class="t" style="left:612.87px;top:1215px;font-size:13.5px;color:#444857;">No</span>
<span class="t" style="left:702.00px;top:1215px;font-size:13.5px;color:#444857;letter-spacing:0.250px;">Heidelberg</span>
<span class="t" style="left:702.00px;top:1232px;font-size:13.5px;color:#444857;letter-spacing:0.282px;">Materials</span>
<span class="t" style="left:839.50px;top:1215px;font-size:13.5px;color:#444857;">H</span>
<span class="t" style="left:839.50px;top:1232px;font-size:13.5px;color:#444857;">(</span>
<span class="t" style="left:1083.19px;top:1215px;font-size:13.5px;color:#444857;">£1180.00</span>
<span class="t" style="left:1196.19px;top:1215px;font-size:13.5px;color:#444857;">£1416.00</span>
<span class="t" style="left:1269.00px;top:1215px;font-size:13.5px;color:#444857;letter-spacing:0.141px;">Lacramioara</span>
<span class="t" style="left:1269.00px;top:1232px;font-size:13.5px;color:#444857;letter-spacing:-0.219px;">Juravle</span>
<span class="t" style="left:1388.50px;top:1215px;font-size:13.5px;color:#2f9a9e;letter-spacing:0.296px;">Ordered</span>
<span class="t" style="left:1490.00px;top:1215px;font-size:13.5px;color:#2f9a9e;letter-spacing:0.108px;">Pending</span>
<span class="t" style="left:1598.00px;top:1215px;font-size:13.5px;color:#2f9a9e;letter-spacing:0.064px;">View Detail</span>
<span class="t" style="left:52.50px;top:1261px;font-size:13.5px;color:#444857;letter-spacing:-0.412px;">SF25-120</span>
<span class="t" style="left:158.00px;top:1261px;font-size:13.5px;color:#444857;letter-spacing:0.192px;">29/01/2025</span>
<span class="t" style="left:258.00px;top:1261px;font-size:13.5px;color:#444857;letter-spacing:0.286px;">Material</span>
<span class="t" style="left:366.50px;top:1261px;font-size:13.5px;color:#444857;letter-spacing:-0.122px;">Type 1</span>
<span class="t" style="left:612.87px;top:1261px;font-size:13.5px;color:#444857;">No</span>
<span class="t" style="left:702.00px;top:1261px;font-size:13.5px;color:#444857;letter-spacing:0.250px;">Heidelberg</span>
<span class="t" style="left:702.00px;top:1278px;font-size:13.5px;color:#444857;letter-spacing:0.282px;">Materials</span>
<span class="t" style="left:839.50px;top:1261px;font-size:13.5px;color:#444857;">H</span>
<span class="t" style="left:839.50px;top:1278px;font-size:13.5px;color:#444857;">(</span>
<span class="t" style="left:1083.19px;top:1261px;font-size:13.5px;color:#444857;">£1180.00</span>
<span class="t" style="left:1196.19px;top:1261px;font-size:13.5px;color:#444857;">£1416.00</span>
<span class="t" style="left:1269.00px;top:1261px;font-size:13.5px;color:#444857;letter-spacing:0.141px;">Lacramioara</span>
<span class="t" style="left:1269.00px;top:1278px;font-size:13.5px;color:#444857;letter-spacing:-0.219px;">Juravle</span>
<span class="t" style="left:1388.50px;top:1261px;font-size:13.5px;color:#2f9a9e;letter-spacing:0.296px;">Ordered</span>
<span class="t" style="left:1490.00px;top:1261px;font-size:13.5px;color:#2f9a9e;letter-spacing:0.108px;">Pending</span>
<span class="t" style="left:1598.00px;top:1261px;font-size:13.5px;color:#2f9a9e;letter-spacing:0.064px;">View Detail</span>
<span class="t" style="left:52.50px;top:1307px;font-size:13.5px;color:#444857;letter-spacing:-0.287px;">SF25-119</span>
<span class="t" style="left:158.00px;top:1307px;font-size:13.5px;color:#444857;letter-spacing:0.192px;">29/01/2025</span>
<span class="t" style="left:258.00px;top:1307px;font-size:13.5px;color:#444857;letter-spacing:0.036px;">Vehicle</span>
<span class="t" style="left:366.50px;top:1307px;font-size:13.5px;color:#444857;letter-spacing:-0.277px;">Parts For HT19 MVS</span>
<span class="t" style="left:610.48px;top:1307px;font-size:13.5px;color:#444857;">Yes</span>
<span class="t" style="left:702.00px;top:1307px;font-size:13.5px;color:#444857;letter-spacing:-0.033px;">Acorn Truck Lea</span>
<span class="t" style="left:702.00px;top:1324px;font-size:13.5px;color:#444857;letter-spacing:0.170px;">Valley</span>
<span class="t" style="left:839.50px;top:1307px;font-size:13.5px;color:#444857;">H</span>
<span class="t" style="left:978.23px;top:1307px;font-size:13.5px;color:#444857;">t</span>
<span class="t" style="left:839.50px;top:1324px;font-size:13.5px;color:#444857;">M</span>
<span class="t" style="left:1084.19px;top:1307px;font-size:13.5px;color:#444857;">£1179.11</span>
<span class="t" style="left:1196.19px;top:1307px;font-size:13.5px;color:#444857;">£1414.93</span>
<span class="t" style="left:1269.00px;top:1307px;font-size:13.5px;color:#444857;letter-spacing:0.141px;">Lacramioara</span>
<span class="t" style="left:1269.00px;top:1324px;font-size:13.5px;color:#444857;letter-spacing:-0.219px;">Juravle</span>
<span class="t" style="left:1388.50px;top:1307px;font-size:13.5px;color:#2f9a9e;letter-spacing:0.296px;">Ordered</span>
<span class="t" style="left:1490.00px;top:1307px;font-size:13.5px;color:#2f9a9e;letter-spacing:0.108px;">Pending</span>
<span class="t" style="left:1598.00px;top:1307px;font-size:13.5px;color:#2f9a9e;letter-spacing:0.064px;">View Detail</span>
<span class="t" style="left:1106.25px;top:1397px;font-size:13.5px;color:#666;font-weight:700;">Sum:</span>
<span class="t" style="left:1076.46px;top:1415px;font-size:13.5px;color:#666;font-weight:700;letter-spacing:-0.036px;">493477.19</span>
<span class="t" style="left:1154.80px;top:1397px;font-size:13.5px;color:#666;font-weight:700;letter-spacing:-0.202px;">Sum: 582512.15</span>
</div>
<div class="nav" style="top:-2px">
<div class="navbg"></div><div class="navsh"></div>
<div style="left:224px;top:0;width:149px;height:56px;background:#eff6fd;border-bottom:2px solid #0fa0a1"></div>
<svg style="left:35.7px;top:20px" width="13" height="13.5" viewBox="0 0 24 24" fill="none" stroke-width="2" stroke-linecap="round" stroke-linejoin="round" stroke="#3f4a66"><path d="M3 9l9-7 9 7v11a2 2 0 0 1-2 2H5a2 2 0 0 1-2-2z"/><path d="M9 22V12h6v10"/></svg>
<svg style="left:117.2px;top:20px" width="13" height="13.5" viewBox="0 0 24 24" fill="none" stroke-width="2" stroke-linecap="round" stroke-linejoin="round" stroke="#3f4a66"><path d="M3 9l9-7 9 7v11a2 2 0 0 1-2 2H5a2 2 0 0 1-2-2z"/><path d="M9 22V12h6v10"/></svg>
<svg style="left:232.1px;top:19.4px" width="15.5" height="15.5" viewBox="0 0 24 24" fill="none" stroke-width="2" stroke-linecap="round" stroke-linejoin="round" stroke="#5a9fa6"><path d="M21 16V8a2 2 0 0 0-1-1.73l-7-4a2 2 0 0 0-2 0l-7 4A2 2 0 0 0 3 8v8a2 2 0 0 0 1 1.73l7 4a2 2 0 0 0 2 0l7-4A2 2 0 0 0 21 16z"/><path d="M3.27 6.96L12 12.01l8.73-5.05"/><path d="M12 22.08V12"/><path d="M16.5 9.4L7.5 4.21"/></svg>
<svg style="left:381px;top:19.2px" width="15.5" height="15.5" viewBox="0 0 24 24" fill="none" stroke-width="2" stroke-linecap="round" stroke-linejoin="round" stroke="#3f4a66"><path d="M21 16V8a2 2 0 0 0-1-1.73l-7-4a2 2 0 0 0-2 0l-7 4A2 2 0 0 0 3 8v8a2 2 0 0 0 1 1.73l7 4a2 2 0 0 0 2 0l7-4A2 2 0 0 0 21 16z"/><path d="M3.27 6.96L12 12.01l8.73-5.05"/><path d="M12 22.08V12"/></svg>
<svg style="left:464px;top:12px" width="30" height="28" viewBox="0 0 30 28" ><circle cx="13.450" cy="8.400" r="4.950" fill="none" stroke="#111" stroke-width="1.200"/><path d="M15 6.900c-.3-.9-2.800-1-2.900.2-.1 1.300 2.900.9 2.800 2.300-.1 1.200-2.600 1.100-3-.1M13.450 5.200v6.400" fill="none" stroke="#111" stroke-width=".9"/><path d="M5 19.100L6.600 17.200 11.400 22 9.600 23.900z" fill="none" stroke="#111" stroke-width="1.200" stroke-linejoin="round"/><path d="M8.200 17.600l2.100-2.300c1.200-.7 2.500-.3 3.300.2l2.200 1.100 3-3.100c.8-.6 1.700.4 1.100 1.300l-4.300 4.900c-.6.500-1.600.5-2.600.5l-2.400.1" fill="none" stroke="#111" stroke-width="1.200" stroke-linejoin="round" stroke-linecap="round"/><path d="M10.600 15.300c1.700-.2 3 1.400 5.100 1.400" fill="none" stroke="#111" stroke-width="1.700" stroke-linecap="round"/></svg>
<svg style="left:587.5px;top:19.8px" width="16" height="14.5" viewBox="0 0 32 29" ><g fill="#3b4d70"><circle cx="16" cy="8.500" r="5.500"/><path d="M5.500 29c-.8 0-1.500-.7-1.500-1.500V24c0-4.400 3.600-8 8-8h8c4.400 0 8 3.600 8 8v3.500c0 .8-.7 1.500-1.500 1.500z"/><circle cx="5.500" cy="5.500" r="3.800"/><circle cx="26.500" cy="5.500" r="3.800"/><path d="M0 17.500V15c0-2.500 2-4.500 4.500-4.500h2c.9 0 1.700.3 2.400.7A8 8 0 0 0 11 15.300C7.700 15.800 5 18.500 4.300 21.800 1.900 21.600 0 19.800 0 17.500z"/><path d="M32 17.500V15c0-2.500-2-4.500-4.500-4.500h-2c-.9 0-1.700.3-2.400.7A8 8 0 0 1 21 15.300c3.300.5 6 3.200 6.700 6.500 2.400-.2 4.300-2 4.300-4.300z"/></g></svg>
<svg style="left:677.5px;top:17px" width="18" height="18" viewBox="0 0 18 18" ><g fill="none" stroke="#8a8a8a" stroke-width="1.100"><path d="M9 15.800H.9V1.500h12.500V6"/><path d="M3.200 1.500v2h8v-2M5.700 1.200c0-1.400 3-1.400 3 0" /><path d="M2.600 5.900h3.800M2.600 7.900h3M2.600 9.900h3M2.600 12.200h3.400" stroke-width="1.300"/><circle cx="11.700" cy="9.600" r="4.300" stroke-width="1.400" fill="#fff"/><path d="M11.700 7.600v2.200h1.900" stroke-width="1"/></g></svg>
<svg style="left:785.5px;top:17px" width="18" height="18" viewBox="0 0 24 24" ><g fill="none" stroke="#8a8a8a" stroke-width="1.400" stroke-linejoin="round"><path d="M10.300 1.500h3.400l.5 2.700 1.700.7 2.300-1.600 2.400 2.400-1.600 2.300.7 1.700 2.700.5v3.400l-2.700.5-.7 1.700 1.600 2.300-2.400 2.400-2.300-1.600-1.700.7-.5 2.700h-3.400l-.5-2.700-1.700-.7-2.300 1.600-2.400-2.400 1.600-2.300-.7-1.700-2.700-.5v-3.400l2.700-.5.700-1.700-1.600-2.300 2.400-2.400 2.300 1.600 1.700-.7z"/><path d="M7 6.500l3 .5 1 3 7.500 8.500-1.500 1.500L8.500 12.500l-3-1-.5-3z" fill="#fff"/><path d="M9 9l8.500 9.500"/></g></svg>
<svg style="left:910px;top:17px" width="18" height="17" viewBox="0 0 18 17" ><g fill="none" stroke="#1a1a1a" stroke-width="1.200"><path d="M12.500 9.500V15.500H.8V.8h11.700V3"/><path d="M3 4h1M5.500 4h5M3 7h1M5.500 7h4M3 10h1M5.500 10h2.500M3 13h1M5.500 13h4"/><path d="M15 2.500l1.800 1.800-6.300 6.500-2.500.8.700-2.600z" fill="#fff" stroke-linejoin="round"/><path d="M13.800 3.700l1.800 1.800"/></g></svg>
<svg style="left:1036px;top:14px" width="26" height="26" viewBox="0 0 26 26" ><g fill="none" stroke="#3f4a66" stroke-width="1.500" stroke-linejoin="round" stroke-linecap="round"><path d="M10.900 7.400V7.600Q10.900 6.600 11.900 6.600H15.600L19.200 10.200V15.500Q19.200 17 17.700 17H15.300"/><path d="M15.600 6.600V9.900H19.200"/><path d="M10.500 7.900H7.400Q5.900 7.900 5.900 9.400V17.700Q5.900 19.200 7.400 19.200H12.900Q14.400 19.200 14.400 17.700V11.700z"/><path d="M10.500 7.900V11.500H14.400"/></g></svg>
<svg style="left:1226.3px;top:19px" width="15" height="15" viewBox="0 0 24 24" fill="none" stroke-width="2" stroke-linecap="round" stroke-linejoin="round" stroke="#3f4a66"><path d="M9 11l3 3L22 4"/><path d="M21 12v7a2 2 0 0 1-2 2H5a2 2 0 0 1-2-2V5a2 2 0 0 1 2-2h11"/></svg>
<svg style="left:1363px;top:19.6px" width="14" height="14" viewBox="0 0 24 24" fill="none" stroke-width="2" stroke-linecap="round" stroke-linejoin="round" stroke="#3f4a66"><circle cx="12" cy="12" r="3"/><path d="M19.400 15a1.650 1.650 0 0 0 .330 1.820l.060.060a2 2 0 0 1 0 2.830 2 2 0 0 1-2.830 0l-.060-.060a1.650 1.650 0 0 0-1.820-.330 1.650 1.650 0 0 0-1 1.510V21a2 2 0 0 1-2 2 2 2 0 0 1-2-2v-.090A1.650 1.650 0 0 0 9 19.400a1.650 1.650 0 0 0-1.820.330l-.060.060a2 2 0 0 1-2.830 0 2 2 0 0 1 0-2.830l.060-.060a1.650 1.650 0 0 0 .330-1.820 1.650 1.650 0 0 0-1.510-1H3a2 2 0 0 1-2-2 2 2 0 0 1 2-2h.090A1.650 1.650 0 0 0 4.600 9a1.650 1.650 0 0 0-.330-1.820l-.060-.060a2 2 0 0 1 0-2.830 2 2 0 0 1 2.830 0l.060.060a1.650 1.650 0 0 0 1.820.330H9a1.650 1.650 0 0 0 1-1.510V3a2 2 0 0 1 2-2 2 2 0 0 1 2 2v.090a1.650 1.650 0 0 0 1 1.510 1.650 1.650 0 0 0 1.820-.330l.060-.060a2 2 0 0 1 2.830 0 2 2 0 0 1 0 2.830l-.060.060a1.650 1.650 0 0 0-.330 1.820V9a1.650 1.650 0 0 0 1.510 1H21a2 2 0 0 1 2 2 2 2 0 0 1-2 2h-.090a1.650 1.650 0 0 0-1.510 1z"/></svg>
<span class="t" style="left:57.00px;top:18px;font-size:15px;color:#525c74;letter-spacing:0.921px;">Home</span>
<span class="t" style="left:138.20px;top:18px;font-size:15px;color:#525c74;letter-spacing:0.457px;">Dashboard</span>
<span class="t" style="left:253.25px;top:18px;font-size:15px;color:#5799a3;letter-spacing:0.454px;">Purchase Order</span>
<span class="t" style="left:402.50px;top:18px;font-size:15px;color:#525c74;letter-spacing:0.545px;">Project</span>
<span class="t" style="left:485.50px;top:17px;font-size:15px;color:#525c74;letter-spacing:0.598px;">Commercial</span>
<span class="t" style="left:610.00px;top:17px;font-size:15px;color:#525c74;letter-spacing:0.490px;">Worker</span>
<span class="t" style="left:695.00px;top:17px;font-size:15px;color:#525c74;letter-spacing:0.585px;">Timesheet</span>
<span class="t" style="left:804.00px;top:17px;font-size:15px;color:#525c74;letter-spacing:0.209px;">Plant &amp; Tools</span>
<span class="t" style="left:927.50px;top:17px;font-size:15px;color:#525c74;letter-spacing:0.469px;">Cognito Form</span>
<span class="t" style="left:1062.00px;top:18px;font-size:15px;color:#525c74;letter-spacing:0.720px;">Company Document</span>
<span class="t" style="left:1247.50px;top:18px;font-size:15px;color:#525c74;letter-spacing:0.490px;">My Timesheet</span>
<span class="t" style="left:1384.00px;top:18px;font-size:15px;color:#525c74;letter-spacing:0.685px;">Setting</span>
</div>
<div class="nav" style="top:590px">
<div class="navbg"></div><div class="navsh"></div>
<div style="left:224px;top:0;width:149px;height:56px;background:#eff6fd;border-bottom:2px solid #0fa0a1"></div>
<svg style="left:35.7px;top:20px" width="13" height="13.5" viewBox="0 0 24 24" fill="none" stroke-width="2" stroke-linecap="round" stroke-linejoin="round" stroke="#3f4a66"><path d="M3 9l9-7 9 7v11a2 2 0 0 1-2 2H5a2 2 0 0 1-2-2z"/><path d="M9 22V12h6v10"/></svg>
<svg style="left:117.2px;top:20px" width="13" height="13.5" viewBox="0 0 24 24" fill="none" stroke-width="2" stroke-linecap="round" stroke-linejoin="round" stroke="#3f4a66"><path d="M3 9l9-7 9 7v11a2 2 0 0 1-2 2H5a2 2 0 0 1-2-2z"/><path d="M9 22V12h6v10"/></svg>
<svg style="left:232.1px;top:19.4px" width="15.5" height="15.5" viewBox="0 0 24 24" fill="none" stroke-width="2" stroke-linecap="round" stroke-linejoin="round" stroke="#5a9fa6"><path d="M21 16V8a2 2 0 0 0-1-1.73l-7-4a2 2 0 0 0-2 0l-7 4A2 2 0 0 0 3 8v8a2 2 0 0 0 1 1.73l7 4a2 2 0 0 0 2 0l7-4A2 2 0 0 0 21 16z"/><path d="M3.27 6.96L12 12.01l8.73-5.05"/><path d="M12 22.08V12"/><path d="M16.5 9.4L7.5 4.21"/></svg>
<svg style="left:381px;top:19.2px" width="15.5" height="15.5" viewBox="0 0 24 24" fill="none" stroke-width="2" stroke-linecap="round" stroke-linejoin="round" stroke="#3f4a66"><path d="M21 16V8a2 2 0 0 0-1-1.73l-7-4a2 2 0 0 0-2 0l-7 4A2 2 0 0 0 3 8v8a2 2 0 0 0 1 1.73l7 4a2 2 0 0 0 2 0l7-4A2 2 0 0 0 21 16z"/><path d="M3.27 6.96L12 12.01l8.73-5.05"/><path d="M12 22.08V12"/></svg>
<svg style="left:464px;top:12px" width="30" height="28" viewBox="0 0 30 28" ><circle cx="13.450" cy="8.400" r="4.950" fill="none" stroke="#111" stroke-width="1.200"/><path d="M15 6.900c-.3-.9-2.800-1-2.900.2-.1 1.300 2.900.9 2.800 2.300-.1 1.200-2.600 1.100-3-.1M13.450 5.200v6.400" fill="none" stroke="#111" stroke-width=".9"/><path d="M5 19.100L6.600 17.200 11.400 22 9.600 23.900z" fill="none" stroke="#111" stroke-width="1.200" stroke-linejoin="round"/><path d="M8.200 17.600l2.100-2.300c1.200-.7 2.500-.3 3.300.2l2.200 1.100 3-3.100c.8-.6 1.700.4 1.100 1.300l-4.300 4.900c-.6.500-1.600.5-2.600.5l-2.400.1" fill="none" stroke="#111" stroke-width="1.200" stroke-linejoin="round" stroke-linecap="round"/><path d="M10.600 15.300c1.700-.2 3 1.400 5.100 1.400" fill="none" stroke="#111" stroke-width="1.700" stroke-linecap="round"/></svg>
<svg style="left:587.5px;top:19.8px" width="16" height="14.5" viewBox="0 0 32 29" ><g fill="#3b4d70"><circle cx="16" cy="8.500" r="5.500"/><path d="M5.500 29c-.8 0-1.500-.7-1.500-1.500V24c0-4.400 3.600-8 8-8h8c4.400 0 8 3.600 8 8v3.500c0 .8-.7 1.500-1.500 1.500z"/><circle cx="5.500" cy="5.500" r="3.800"/><circle cx="26.500" cy="5.500" r="3.800"/><path d="M0 17.500V15c0-2.500 2-4.500 4.500-4.500h2c.9 0 1.700.3 2.400.7A8 8 0 0 0 11 15.300C7.700 15.800 5 18.500 4.300 21.800 1.900 21.600 0 19.800 0 17.500z"/><path d="M32 17.500V15c0-2.500-2-4.500-4.500-4.500h-2c-.9 0-1.700.3-2.400.7A8 8 0 0 1 21 15.300c3.300.5 6 3.200 6.700 6.500 2.400-.2 4.300-2 4.300-4.300z"/></g></svg>
<svg style="left:677.5px;top:17px" width="18" height="18" viewBox="0 0 18 18" ><g fill="none" stroke="#8a8a8a" stroke-width="1.100"><path d="M9 15.800H.9V1.500h12.500V6"/><path d="M3.200 1.500v2h8v-2M5.700 1.200c0-1.400 3-1.400 3 0" /><path d="M2.600 5.900h3.800M2.600 7.900h3M2.600 9.900h3M2.600 12.200h3.400" stroke-width="1.300"/><circle cx="11.700" cy="9.600" r="4.300" stroke-width="1.400" fill="#fff"/><path d="M11.700 7.600v2.200h1.900" stroke-width="1"/></g></svg>
<svg style="left:785.5px;top:17px" width="18" height="18" viewBox="0 0 24 24" ><g fill="none" stroke="#8a8a8a" stroke-width="1.400" stroke-linejoin="round"><path d="M10.300 1.500h3.400l.5 2.700 1.700.7 2.300-1.600 2.400 2.400-1.600 2.300.7 1.700 2.700.5v3.400l-2.700.5-.7 1.700 1.600 2.300-2.400 2.400-2.300-1.600-1.700.7-.5 2.700h-3.400l-.5-2.700-1.700-.7-2.300 1.600-2.400-2.400 1.600-2.300-.7-1.700-2.700-.5v-3.400l2.700-.5.700-1.700-1.600-2.300 2.400-2.400 2.300 1.600 1.700-.7z"/><path d="M7 6.500l3 .5 1 3 7.500 8.500-1.500 1.500L8.500 12.500l-3-1-.5-3z" fill="#fff"/><path d="M9 9l8.500 9.500"/></g></svg>
<svg style="left:910px;top:17px" width="18" height="17" viewBox="0 0 18 17" ><g fill="none" stroke="#1a1a1a" stroke-width="1.200"><path d="M12.500 9.500V15.500H.8V.8h11.700V3"/><path d="M3 4h1M5.500 4h5M3 7h1M5.500 7h4M3 10h1M5.500 10h2.500M3 13h1M5.500 13h4"/><path d="M15 2.500l1.800 1.800-6.300 6.500-2.500.8.700-2.600z" fill="#fff" stroke-linejoin="round"/><path d="M13.800 3.700l1.800 1.800"/></g></svg>
<svg style="left:1036px;top:14px" width="26" height="26" viewBox="0 0 26 26" ><g fill="none" stroke="#3f4a66" stroke-width="1.500" stroke-linejoin="round" stroke-linecap="round"><path d="M10.900 7.400V7.600Q10.900 6.600 11.900 6.600H15.600L19.200 10.200V15.500Q19.200 17 17.700 17H15.300"/><path d="M15.600 6.600V9.900H19.200"/><path d="M10.500 7.900H7.400Q5.900 7.900 5.900 9.400V17.700Q5.900 19.200 7.400 19.200H12.900Q14.400 19.200 14.400 17.700V11.700z"/><path d="M10.500 7.900V11.500H14.400"/></g></svg>
<svg style="left:1226.3px;top:19px" width="15" height="15" viewBox="0 0 24 24" fill="none" stroke-width="2" stroke-linecap="round" stroke-linejoin="round" stroke="#3f4a66"><path d="M9 11l3 3L22 4"/><path d="M21 12v7a2 2 0 0 1-2 2H5a2 2 0 0 1-2-2V5a2 2 0 0 1 2-2h11"/></svg>
<svg style="left:1363px;top:19.6px" width="14" height="14" viewBox="0 0 24 24" fill="none" stroke-width="2" stroke-linecap="round" stroke-linejoin="round" stroke="#3f4a66"><circle cx="12" cy="12" r="3"/><path d="M19.400 15a1.650 1.650 0 0 0 .330 1.820l.060.060a2 2 0 0 1 0 2.830 2 2 0 0 1-2.830 0l-.060-.060a1.650 1.650 0 0 0-1.820-.330 1.650 1.650 0 0 0-1 1.510V21a2 2 0 0 1-2 2 2 2 0 0 1-2-2v-.090A1.650 1.650 0 0 0 9 19.400a1.650 1.650 0 0 0-1.820.330l-.060.060a2 2 0 0 1-2.830 0 2 2 0 0 1 0-2.830l.060-.060a1.650 1.650 0 0 0 .330-1.820 1.650 1.650 0 0 0-1.510-1H3a2 2 0 0 1-2-2 2 2 0 0 1 2-2h.090A1.650 1.650 0 0 0 4.600 9a1.650 1.650 0 0 0-.330-1.820l-.060-.060a2 2 0 0 1 0-2.830 2 2 0 0 1 2.830 0l.060.060a1.650 1.650 0 0 0 1.820.330H9a1.650 1.650 0 0 0 1-1.510V3a2 2 0 0 1 2-2 2 2 0 0 1 2 2v.090a1.650 1.650 0 0 0 1 1.510 1.650 1.650 0 0 0 1.820-.330l.060-.060a2 2 0 0 1 2.830 0 2 2 0 0 1 0 2.830l-.060.060a1.650 1.650 0 0 0-.330 1.820V9a1.650 1.650 0 0 0 1.510 1H21a2 2 0 0 1 2 2 2 2 0 0 1-2 2h-.090a1.650 1.650 0 0 0-1.510 1z"/></svg>
<span class="t" style="left:57.00px;top:18px;font-size:15px;color:#525c74;letter-spacing:0.921px;">Home</span>
<span class="t" style="left:138.20px;top:18px;font-size:15px;color:#525c74;letter-spacing:0.457px;">Dashboard</span>
<span class="t" style="left:253.25px;top:18px;font-size:15px;color:#5799a3;letter-spacing:0.454px;">Purchase Order</span>
<span class="t" style="left:402.50px;top:18px;font-size:15px;color:#525c74;letter-spacing:0.545px;">Project</span>
<span class="t" style="left:485.50px;top:17px;font-size:15px;color:#525c74;letter-spacing:0.598px;">Commercial</span>
<span class="t" style="left:610.00px;top:17px;font-size:15px;color:#525c74;letter-spacing:0.490px;">Worker</span>
<span class="t" style="left:695.00px;top:17px;font-size:15px;color:#525c74;letter-spacing:0.585px;">Timesheet</span>
<span class="t" style="left:804.00px;top:17px;font-size:15px;color:#525c74;letter-spacing:0.209px;">Plant &amp; Tools</span>
<span class="t" style="left:927.50px;top:17px;font-size:15px;color:#525c74;letter-spacing:0.469px;">Cognito Form</span>
<span class="t" style="left:1062.00px;top:18px;font-size:15px;color:#525c74;letter-spacing:0.720px;">Company Document</span>
<span class="t" style="left:1247.50px;top:18px;font-size:15px;color:#525c74;letter-spacing:0.490px;">My Timesheet</span>
<span class="t" style="left:1384.00px;top:18px;font-size:15px;color:#525c74;letter-spacing:0.685px;">Setting</span>
</div>
<div class="strip" style="left:0;width:9px;border-right:1px solid #000;box-sizing:border-box"></div>
<div class="strip" style="left:1912px;width:8px;border-left:1px solid #000;box-sizing:border-box"></div>
</body></html>
